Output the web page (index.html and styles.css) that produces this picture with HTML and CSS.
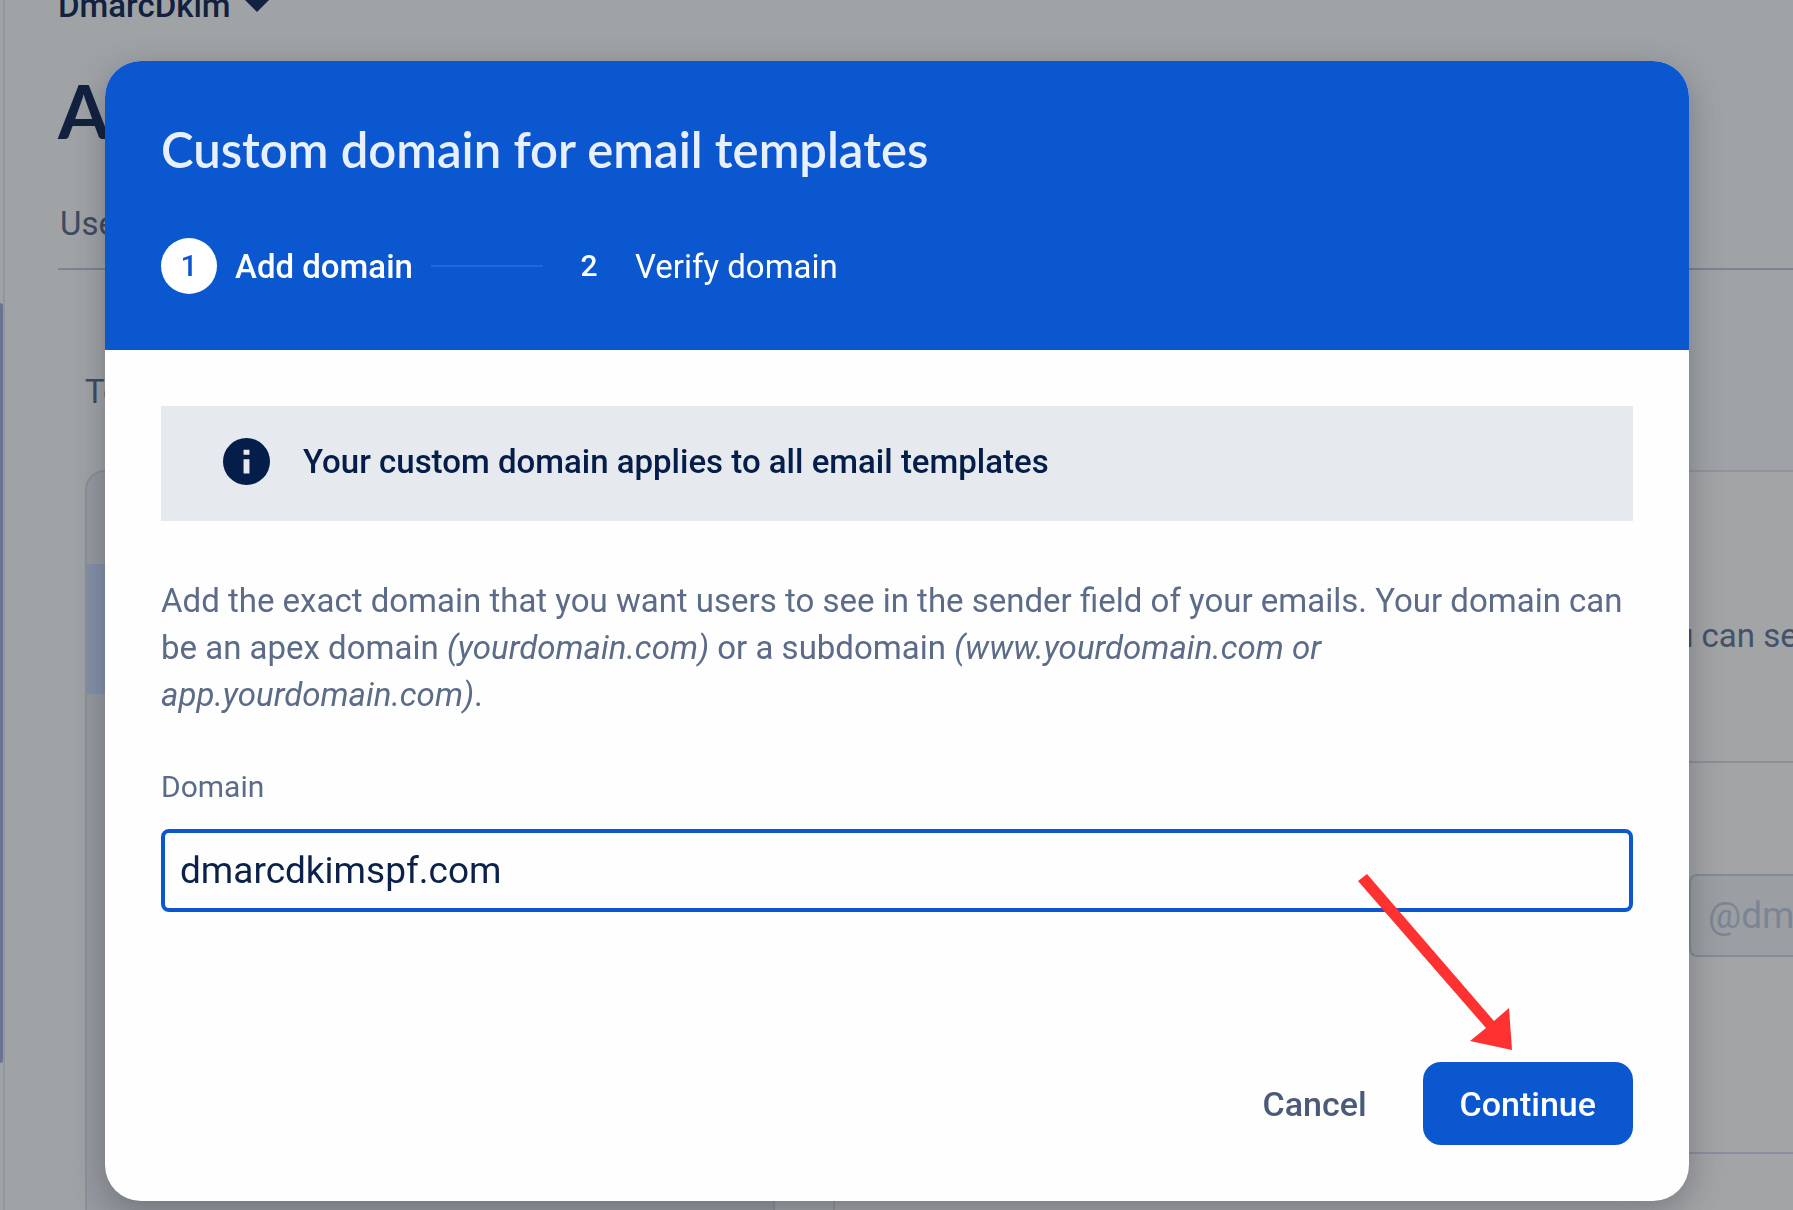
FILE: index.html
```html
<!DOCTYPE html>
<html lang="en">
<head>
<meta charset="utf-8">
<meta name="viewport" content="width=device-width, initial-scale=1">
<title>Custom domain for email templates</title>
<link rel="stylesheet" href="styles.css">
</head>
<body>
<div class="page">
  <div class="rail"><span class="rail-thumb"></span></div>
  <main class="main">
    <div class="project">DmarcDkim
      <svg class="caret" viewBox="0 0 24 12" aria-hidden="true"><path d="M0 0h24L12 12z"/></svg>
    </div>
    <h1 class="page-title">Authentication</h1>
    <div class="tabs"><span>Users</span></div>
    <section class="content">
      <h2 class="content-title">Templates</h2>
      <div class="columns">
        <div class="menu"><div class="menu-selected"></div></div>
        <div class="panel">
          <div class="panel-intro">you can send</div>
          <div class="panel-form"><span class="suffix">@dmarcdkim</span></div>
          <div class="panel-rest"></div>
        </div>
      </div>
    </section>
  </main>
</div>

<div class="overlay">
  <form class="dialog" role="dialog" aria-labelledby="dialog-title">
    <header class="dialog-header">
      <h2 class="dialog-title" id="dialog-title">Custom domain for email templates</h2>
      <ol class="steps">
        <li class="step step-active"><span class="step-number">1</span><span>Add domain</span></li>
        <li class="step-line" aria-hidden="true"></li>
        <li class="step"><span class="step-number">2</span><span>Verify domain</span></li>
      </ol>
    </header>
    <div class="dialog-body">
      <div class="notice">
        <svg class="notice-icon" viewBox="0 0 24 24" aria-hidden="true">
          <circle cx="12" cy="12" r="12"/>
          <path d="M10.5 6h3v2.6h-3zM10.5 10.9h3v7.2h-3z" fill="#e6eaee"/>
        </svg>
        <p class="notice-text">Your custom domain applies to all email templates</p>
      </div>
      <p class="help">Add the exact domain that you want users to see in the sender field of your emails. Your domain can be an apex domain <em>(yourdomain.com)</em> or a subdomain <em>(www.yourdomain.com or app.yourdomain.com)</em>.</p>
      <label class="label" for="domain">Domain</label>
      <input class="input" id="domain" type="text" value="dmarcdkimspf.com">
      <div class="actions">
        <button class="button" type="button">Cancel</button>
        <button class="button button-primary" type="submit">Continue</button>
      </div>
    </div>
    <svg class="arrow" viewBox="0 0 156 178" aria-hidden="true"><path d="M1 8 10 1 137 148 152 135 155 177 113 168 129 155z"/></svg>
  </form>
</div>
</body>
</html>
```
FILE: styles.css
```css
* { box-sizing: border-box; }

body {
  margin: 0;
  font-family: Roboto, "Liberation Sans", sans-serif;
  font-size: 33px;
  line-height: 47px;
  overflow: hidden;
}

h1, h2, p, ol { margin: 0; padding: 0; font-weight: 500; }

/* Dimmed page behind the dialog */
.page {
  display: flex;
  height: 100vh;
  overflow: hidden;
  background: #a0a3a6;
  color: #3d4a62;
}

.rail {
  flex: none;
  width: 5px;
  padding-top: 303px;
  border-right: 2px solid #9296a0;
}

.rail-thumb {
  display: block;
  width: 3px;
  height: 760px;
  border-radius: 0 3px 3px 0;
  background: #69748f;
}

.main {
  flex: 1;
  min-width: 0;
  padding-left: 53px;
}

.project {
  display: flex;
  align-items: center;
  gap: 14px;
  height: 47px;
  margin-top: -18px;
  font-weight: 500;
  color: #12213f;
}

.caret { width: 24px; height: 12px; fill: #12213f; }

.page-title {
  margin-top: 34px;
  font-family: Lato, Roboto, sans-serif;
  font-size: 74px;
  font-weight: 700;
  line-height: 96px;
  color: #12213f;
}

.tabs {
  height: 111px;
  padding: 41px 2px 0;
  border-bottom: 2px solid #7d8392;
}

.content { padding: 98px 0 0 27px; }

.content-title {
  font-size: 33px;
  font-weight: 400;
  line-height: 47px;
}

.columns {
  display: flex;
  gap: 58px;
  height: 800px;
  margin-top: 55px;
}

.menu {
  flex: none;
  width: 690px;
  padding-top: 92px;
  border: 2px solid #8c9199;
  border-radius: 20px 20px 0 0;
  background: #979aa0;
}

.menu-selected { height: 130px; background: #8491a8; }

.panel {
  flex: 1;
  min-width: 0;
  border: solid #8f94a1;
  border-width: 2px 0 0 2px;
  border-radius: 20px 0 0;
  background: #a3a4a6;
  overflow: hidden;
  white-space: nowrap;
}

.panel-intro {
  height: 291px;
  padding: 140px 0 0 806px;
  border-bottom: 2px solid #8a8f9b;
  color: #44526a;
}

.panel-form {
  height: 391px;
  padding: 111px 0 0 854px;
  border-bottom: 2px solid #8a8f9b;
}

.suffix {
  display: block;
  height: 83px;
  padding: 0 17px;
  border: 2px solid #858b97;
  border-right: 0;
  border-radius: 8px 0 0 8px;
  background: #9b9fa3;
  color: #7c8593;
  font-size: 37px;
  line-height: 80px;
}

/* Dialog */
.overlay {
  position: fixed;
  inset: 0;
  padding: 61px 104px 0 105px;
}

.dialog {
  position: relative;
  border-radius: 36px;
  background: #fefefe;
  box-shadow: 0 10px 34px rgba(20, 28, 40, .3);
}

.dialog-header {
  padding: 56px;
  border-radius: 36px 36px 0 0;
  background: #0b57d0;
  color: #fff;
}

.dialog-title {
  margin-bottom: 57px;
  font-family: Lato, Roboto, sans-serif;
  font-size: 49px;
  font-weight: 600;
  line-height: 64px;
  color: #e8f0fe;
}

.steps {
  display: flex;
  align-items: center;
  list-style: none;
}

.step {
  display: flex;
  align-items: center;
  gap: 18px;
  font-weight: 400;
}

.step-active { font-weight: 500; }

.step-number {
  width: 56px;
  border-radius: 50%;
  font-size: 30px;
  font-weight: 500;
  line-height: 56px;
  text-align: center;
}

.step-active .step-number { background: #fff; color: #0b57d0; }

.step-line {
  width: 112px;
  height: 2px;
  margin: 0 18px;
  background: #2766d8;
}

.dialog-body { padding: 56px; }

.notice {
  display: flex;
  gap: 33px;
  padding: 32px 62px 36px;
  background: #e6eaee;
  color: #041e49;
}

.notice-icon { flex: none; width: 47px; height: 47px; fill: #041e49; }

.notice-text { font-weight: 500; }

.help {
  margin: 56px 0 45px;
  font-weight: 400;
  color: #5b6b88;
}

.label { display: block; font-size: 30px; color: #5b6b88; }

.input {
  display: block;
  width: 100%;
  height: 83px;
  margin-top: 19px;
  padding: 0 15px;
  border: 4px solid #0b57d0;
  border-radius: 8px;
  outline: 0;
  background: #fefefe;
  color: #0b2149;
  font: 400 37px Roboto, "Liberation Sans", sans-serif;
}

.actions {
  display: flex;
  justify-content: flex-end;
  gap: 19px;
  margin-top: 150px;
}

.button {
  height: 83px;
  padding: 0 37px;
  border: 0;
  border-radius: 18px;
  background: transparent;
  color: #4a5a78;
  font: 500 34px Roboto, "Liberation Sans", sans-serif;
}

.button-primary { background: #0b57d0; color: #fff; }

/* Pointer laid over the dialog, aimed at the primary button */
.arrow {
  position: absolute;
  right: 176px;
  bottom: 150px;
  width: 156px;
  height: 178px;
  fill: #ff3131;
}
```
